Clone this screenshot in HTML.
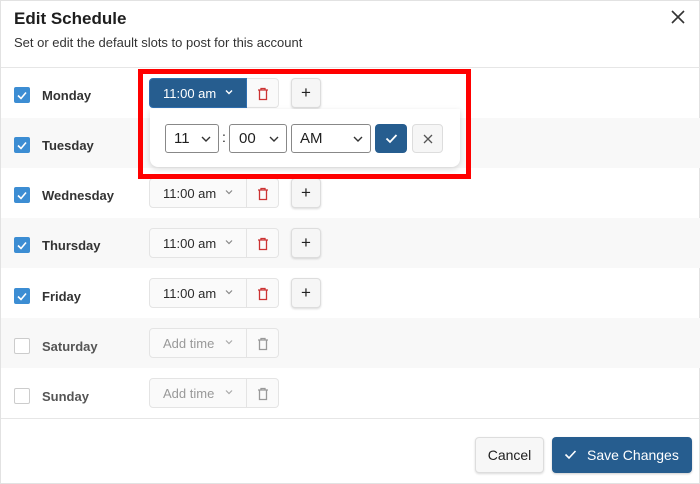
<!DOCTYPE html>
<html><head><style>
*{box-sizing:border-box;margin:0;padding:0}
body{width:700px;height:484px;background:#fff;font-family:"Liberation Sans",sans-serif;color:#1e1e1e;position:relative;overflow:hidden;border:1px solid #e2e2e2}
.abs{position:absolute}
.row{position:absolute;left:0;width:700px;height:50px}
.g{background:#f8f8f8}
.cb{position:absolute;left:13px;width:16px;height:16px;border-radius:2px;background:#3c8dd3}
.cb svg{display:block}
.cb.off{background:#fff;border:1px solid #ccc}
.lbl{position:absolute;left:41px;font-size:13px;font-weight:bold;color:#333}
.lbl.off{color:#555}
.sel{position:absolute;left:148px;width:98px;height:30px;border:1px solid #e4e4e4;border-radius:4px 0 0 4px;background:#fafafa;font-size:13px;color:#2a2a2a;padding:7px 0 0 13px}
.sel .ch{position:absolute;right:12px;top:8px}
.tr{position:absolute;left:246px;width:32px;height:30px;border:1px solid #e4e4e4;border-left:none;border-radius:0 4px 4px 0;background:#fafafa}
.tr svg{position:absolute;left:10px;top:8px}
.pl{position:absolute;left:290px;width:30px;height:30px;border:1px solid #ddd;border-radius:4px;background:#f6f6f6;box-shadow:0 1px 2px rgba(0,0,0,.15);font-size:17px;text-align:center;line-height:27px;color:#222}
</style></head><body>
<div class="abs" style="left:13px;top:8px;font-size:17px;font-weight:bold;color:#1e1e1e">Edit Schedule</div>
<div class="abs" style="left:13px;top:34px;font-size:13px;color:#333">Set or edit the default slots to post for this account</div>
<svg class="abs" style="left:670px;top:9px" width="14" height="14" viewBox="0 0 14 14"><path d="M1 1L13 13M13 1L1 13" stroke="#333" stroke-width="1.6"/></svg>
<div class="abs" style="left:0;top:66px;width:700px;height:1px;background:#e6e6e6"></div>

<div class="row" style="top:67px"></div>
<div class="row g" style="top:117px"></div>
<div class="row" style="top:167px"></div>
<div class="row g" style="top:217px"></div>
<div class="row" style="top:267px"></div>
<div class="row g" style="top:317px"></div>
<div class="row" style="top:367px"></div>
<div class="abs" style="left:0;top:417px;width:700px;height:1px;background:#e6e6e6"></div>

<!-- checkboxes & labels -->
<div class="cb" style="top:86px"><svg width="16" height="16"><path d="M4 8.5l3 3 5-6" stroke="#fff" stroke-width="1.6" fill="none"/></svg></div>
<div class="lbl" style="top:87px">Monday</div>
<div class="cb" style="top:136px"><svg width="16" height="16"><path d="M4 8.5l3 3 5-6" stroke="#fff" stroke-width="1.6" fill="none"/></svg></div>
<div class="lbl" style="top:137px">Tuesday</div>
<div class="cb" style="top:186px"><svg width="16" height="16"><path d="M4 8.5l3 3 5-6" stroke="#fff" stroke-width="1.6" fill="none"/></svg></div>
<div class="lbl" style="top:187px">Wednesday</div>
<div class="cb" style="top:236px"><svg width="16" height="16"><path d="M4 8.5l3 3 5-6" stroke="#fff" stroke-width="1.6" fill="none"/></svg></div>
<div class="lbl" style="top:237px">Thursday</div>
<div class="cb" style="top:287px"><svg width="16" height="16"><path d="M4 8.5l3 3 5-6" stroke="#fff" stroke-width="1.6" fill="none"/></svg></div>
<div class="lbl" style="top:288px">Friday</div>
<div class="cb off" style="top:337px"></div>
<div class="lbl off" style="top:338px">Saturday</div>
<div class="cb off" style="top:387px"></div>
<div class="lbl off" style="top:388px">Sunday</div>

<!-- Monday active -->
<div class="sel" style="top:77px;background:#265d8f;border-color:#2f6fb0;color:#fff">11:00 am<svg class="ch" width="10" height="10"><path d="M2 3.5l3 3 3-3" stroke="#fff" stroke-width="1.4" fill="none"/></svg></div>
<div class="tr" style="top:77px"><svg width="12" height="14"><path d="M1 3h10M4 3V1.5h4V3M2.5 3.5v9h7v-9" stroke="#c33" stroke-width="1.3" fill="none"/></svg></div>
<div class="pl" style="top:77px">+</div>

<!-- rows -->
<div class="sel" style="top:177px">11:00 am<svg class="ch" width="10" height="10"><path d="M2 3.5l3 3 3-3" stroke="#888" stroke-width="1.2" fill="none"/></svg></div>
<div class="tr" style="top:177px"><svg width="12" height="14"><path d="M1 3h10M4 3V1.5h4V3M2.5 3.5v9h7v-9" stroke="#c33" stroke-width="1.3" fill="none"/></svg></div>
<div class="pl" style="top:177px">+</div>
<div class="sel" style="top:227px">11:00 am<svg class="ch" width="10" height="10"><path d="M2 3.5l3 3 3-3" stroke="#888" stroke-width="1.2" fill="none"/></svg></div>
<div class="tr" style="top:227px"><svg width="12" height="14"><path d="M1 3h10M4 3V1.5h4V3M2.5 3.5v9h7v-9" stroke="#c33" stroke-width="1.3" fill="none"/></svg></div>
<div class="pl" style="top:227px">+</div>
<div class="sel" style="top:277px">11:00 am<svg class="ch" width="10" height="10"><path d="M2 3.5l3 3 3-3" stroke="#888" stroke-width="1.2" fill="none"/></svg></div>
<div class="tr" style="top:277px"><svg width="12" height="14"><path d="M1 3h10M4 3V1.5h4V3M2.5 3.5v9h7v-9" stroke="#c33" stroke-width="1.3" fill="none"/></svg></div>
<div class="pl" style="top:277px">+</div>
<div class="sel" style="top:327px;color:#999">Add time<svg class="ch" width="10" height="10"><path d="M2 3.5l3 3 3-3" stroke="#aaa" stroke-width="1.2" fill="none"/></svg></div>
<div class="tr" style="top:327px"><svg width="12" height="14"><path d="M1 3h10M4 3V1.5h4V3M2.5 3.5v9h7v-9" stroke="#999" stroke-width="1.3" fill="none"/></svg></div>
<div class="sel" style="top:377px;color:#999">Add time<svg class="ch" width="10" height="10"><path d="M2 3.5l3 3 3-3" stroke="#aaa" stroke-width="1.2" fill="none"/></svg></div>
<div class="tr" style="top:377px"><svg width="12" height="14"><path d="M1 3h10M4 3V1.5h4V3M2.5 3.5v9h7v-9" stroke="#999" stroke-width="1.3" fill="none"/></svg></div>

<!-- popup -->
<div class="abs" style="left:149px;top:108px;width:310px;height:58px;background:#fff;border-radius:0 0 8px 8px;box-shadow:0 2px 6px rgba(0,0,0,.15)"></div>
<div class="abs" style="left:164px;top:123px;width:54px;height:29px;border:1px solid #888;border-radius:3px;background:#fff;font-size:15px;padding:5px 0 0 8px">11<svg class="abs" style="right:6px;top:9px" width="12" height="10"><path d="M2 3l4 4 4-4" stroke="#333" stroke-width="1.4" fill="none"/></svg></div>
<div class="abs" style="left:221px;top:128px;font-size:14px">:</div>
<div class="abs" style="left:228px;top:123px;width:58px;height:29px;border:1px solid #888;border-radius:3px;background:#fff;font-size:15px;padding:5px 0 0 9px">00<svg class="abs" style="right:6px;top:9px" width="12" height="10"><path d="M2 3l4 4 4-4" stroke="#333" stroke-width="1.4" fill="none"/></svg></div>
<div class="abs" style="left:290px;top:123px;width:80px;height:29px;border:1px solid #888;border-radius:3px;background:#fff;font-size:15px;padding:5px 0 0 8px">AM<svg class="abs" style="right:6px;top:9px" width="12" height="10"><path d="M2 3l4 4 4-4" stroke="#333" stroke-width="1.4" fill="none"/></svg></div>
<div class="abs" style="left:374px;top:123px;width:32px;height:29px;border-radius:4px;background:#265d8f"><svg class="abs" style="left:10px;top:9px" width="13" height="11"><path d="M1.5 5.5l3.5 3.5 6.5-7" stroke="#fff" stroke-width="1.8" fill="none"/></svg></div>
<div class="abs" style="left:411px;top:123px;width:31px;height:29px;border-radius:4px;border:1px solid #ddd;background:#f6f6f6"><svg class="abs" style="left:10px;top:9px" width="10" height="10"><path d="M1 1l8 8M9 1l-8 8" stroke="#555" stroke-width="1.3"/></svg></div>

<!-- red box -->
<div class="abs" style="left:137px;top:68px;width:333px;height:110px;border:5px solid #ff0000"></div>

<!-- footer -->
<div class="abs" style="left:474px;top:436px;width:69px;height:36px;border:1px solid #ddd;border-radius:4px;background:#f7f7f7;box-shadow:0 1px 2px rgba(0,0,0,.15);font-size:14px;text-align:center;line-height:34px;color:#1e1e1e">Cancel</div>
<div class="abs" style="left:551px;top:436px;width:140px;height:36px;border-radius:4px;background:#265d8f;box-shadow:0 1px 2px rgba(0,0,0,.2);font-size:14px;color:#fff;line-height:36px;padding-left:35px">Save Changes<svg class="abs" style="left:12px;top:12px" width="13" height="11"><path d="M1.5 5.5l3.5 3.5 6.5-7" stroke="#fff" stroke-width="1.6" fill="none"/></svg></div>
</body></html>
